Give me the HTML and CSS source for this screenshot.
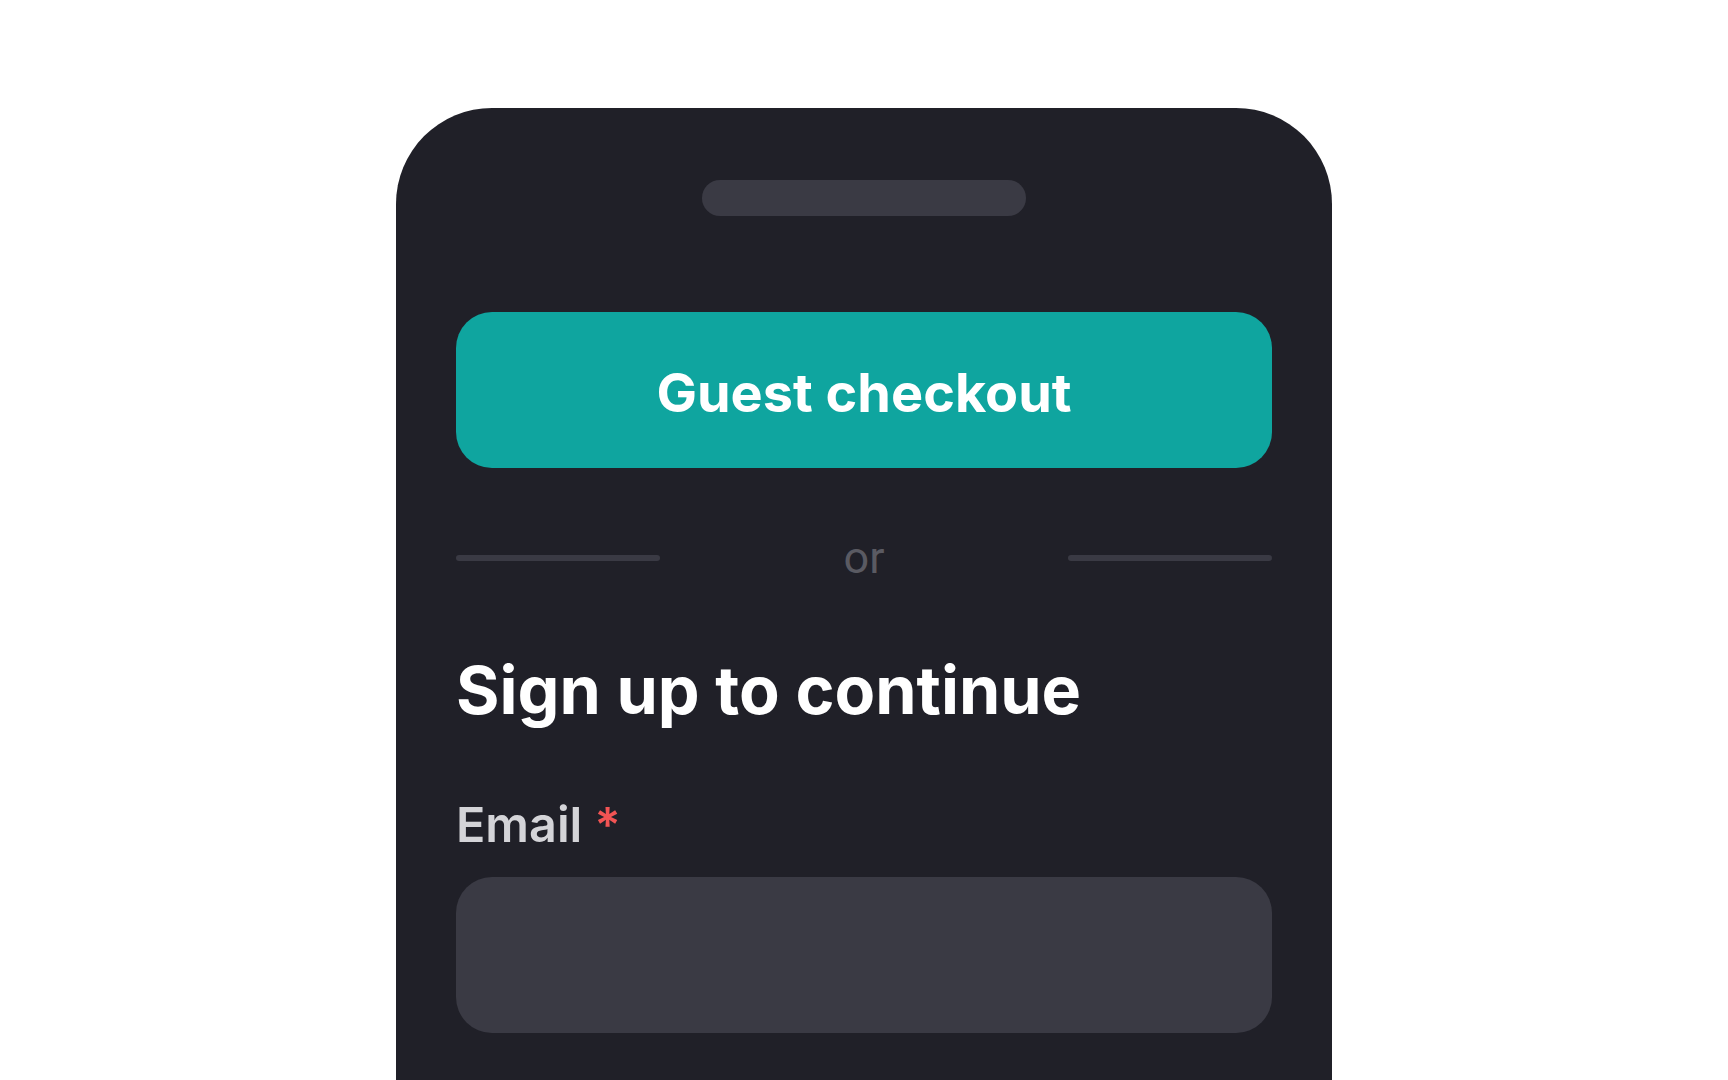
FILE: index.html
```html
<!DOCTYPE html>
<html lang="en">
<head>
  <meta charset="UTF-8">
  <title>Checkout</title>
  <link rel="stylesheet" href="styles.css">
</head>
<body>
  <div class="phone">
    <div class="notch"></div>

    <button class="guest-btn" type="button">Guest checkout</button>

    <div class="divider">
      <span class="divider-line"></span>
      <span class="divider-text">or</span>
      <span class="divider-line"></span>
    </div>

    <h1 class="title">Sign up to continue</h1>

    <label class="field-label" for="email">Email <span class="required">*</span></label>
    <input class="field-input" id="email" type="email">
  </div>
</body>
</html>
```

FILE: styles.css
```css
html, body {
  margin: 0;
  padding: 0;
  height: 100%;
  background: #fff;
  font-family: 'Inter', 'Noto Sans', sans-serif;
  overflow: hidden;
}
.phone {
  width: 936px;
  height: 1100px;
  margin: 108px auto 0;
  padding: 72px 60px 0;
  box-sizing: border-box;
  background: #202028;
  border-radius: 96px 96px 0 0;
  display: flex;
  flex-direction: column;
}
.notch {
  width: 324px;
  height: 36px;
  border-radius: 18px;
  background: #3a3a44;
  align-self: center;
  flex-shrink: 0;
}
.guest-btn {
  margin-top: 96px;
  height: 156px;
  padding: 5px 0 0;
  flex-shrink: 0;
  border: none;
  border-radius: 36px;
  background: #0fa59f;
  color: #fff;
  font-family: 'Inter', sans-serif;
  font-size: 54px;
  font-weight: 700;
  cursor: pointer;
}
.divider {
  margin-top: 59px;
  height: 62px;
  display: flex;
  align-items: center;
  justify-content: space-between;
}
.divider-line {
  width: 204px;
  height: 6px;
  border-radius: 3px;
  background: #3a3a44;
}
.divider-text {
  font-family: 'Roboto', sans-serif;
  font-size: 45px;
  line-height: 62px;
  color: #5a5a62;
}
.title {
  margin: 62px 0 0;
  font-size: 66.4px;
  line-height: 1.2;
  font-weight: 700;
  color: #fff;
}
.field-label {
  margin-top: 65px;
  font-size: 48.5px;
  line-height: 1.2;
  font-weight: 600;
  color: #d4d4d8;
}
.required {
  color: #f25454;
}
.field-input {
  margin-top: 23px;
  height: 154px;
  flex-shrink: 0;
  border: none;
  border-radius: 36px;
  background: #3a3a44;
  outline: none;
}
```
